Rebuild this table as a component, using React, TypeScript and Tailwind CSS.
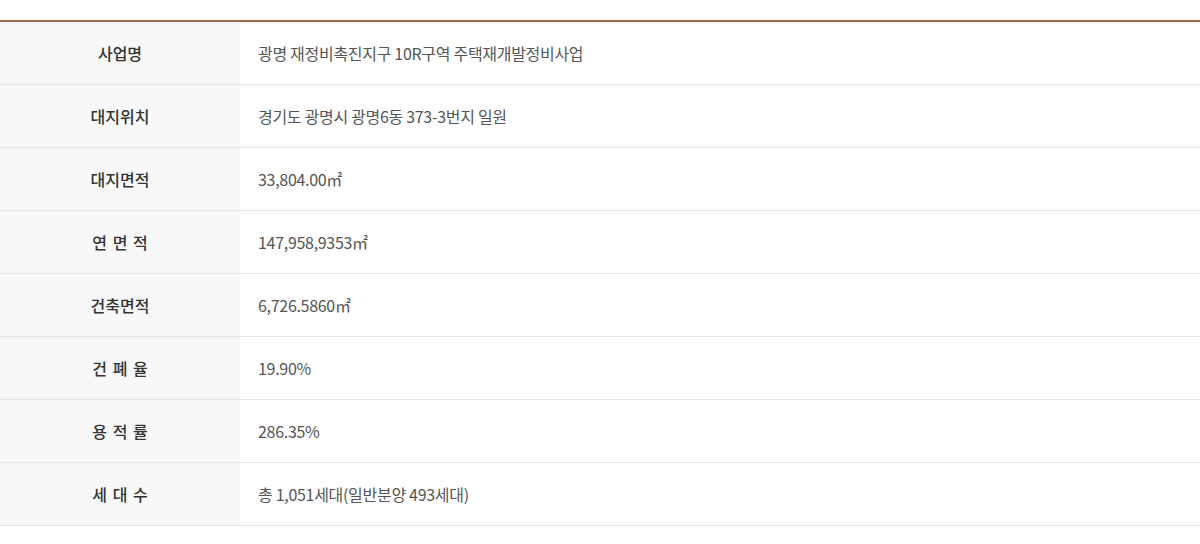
import React from "react";

const rows: [string, React.ReactNode][] = [
  ["사업명", "광명 재정비촉진지구 10R구역 주택재개발정비사업"],
  ["대지위치", "경기도 광명시 광명6동 373-3번지 일원"],
  ["대지면적", "33,804.00㎡"],
  ["연 면 적", "147,958,9353㎡"],
  ["건축면적", "6,726.5860㎡"],
  ["건 폐 율", "19.90%"],
  ["용 적 률", "286.35%"],
  ["세 대 수", "총 1,051세대(일반분양 493세대)"],
];

export default function App() {
  return (
    <div
      className="w-[1200px] h-[544px] bg-white pt-[20px]"
      style={{ fontFamily: '"Noto Sans CJK KR", "Noto Sans", sans-serif' }}
    >
      <div className="border-t-2 border-[#a3674d]">
        {rows.map(([k, v]) => (
          <div key={k} className="flex h-[63px] border-b border-[#e6e6e6]">
            <div className="w-[240px] bg-[#f8f8f8] flex items-center justify-center text-[16px] text-[#333] font-medium whitespace-pre [word-spacing:2px]">
              {k}
            </div>
            <div className="flex-1 flex items-center pl-[18px] text-[16px] text-[#555] tracking-[-0.3px] pb-[1px]">
              {v}
            </div>
          </div>
        ))}
      </div>
    </div>
  );
}
